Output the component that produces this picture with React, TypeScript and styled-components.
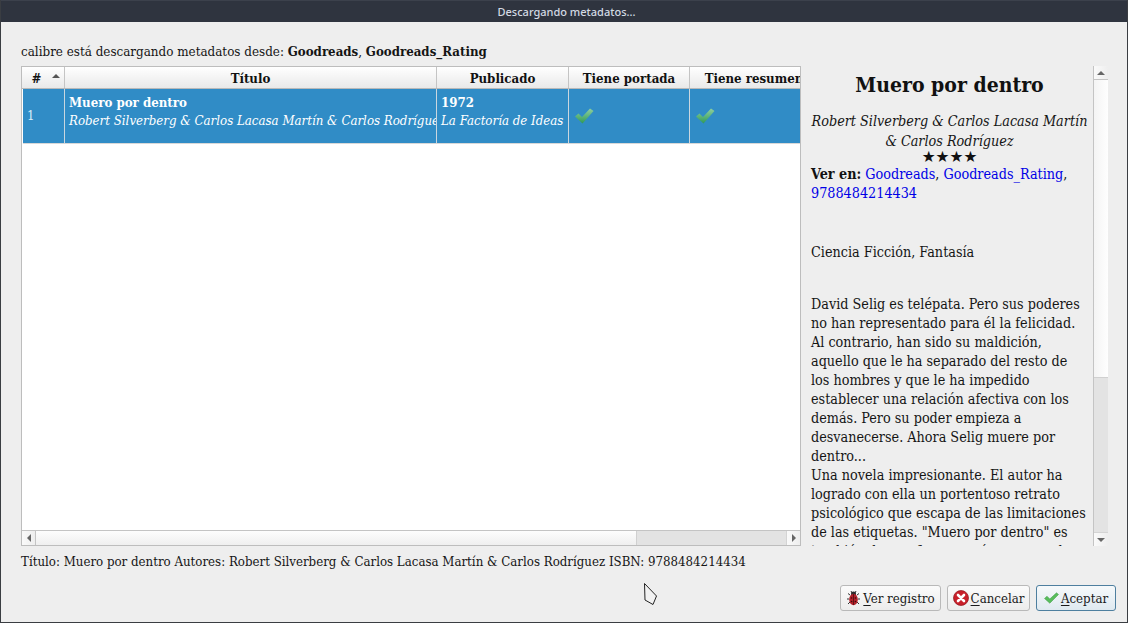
import React from "react";
import styled, { createGlobalStyle } from "styled-components";

const SERIF = `"DejaVu Serif Condensed", "DejaVu Serif", "Liberation Serif", serif`;

const Global = createGlobalStyle`
  html, body { margin: 0; padding: 0; background: #eeeeee; }
  body { width: 1128px; height: 623px; overflow: hidden; }
`;

const Win = styled.div`
  position: relative;
  width: 1128px;
  height: 623px;
  box-sizing: border-box;
  display: flex;
  flex-direction: column;
  background: #eeeeee;
  border: 1px solid #3a3d42;
  border-top: 0;
  font-family: ${SERIF};
  font-stretch: condensed;
  font-size: 13.15px;
  color: #151515;
  overflow: hidden;
`;

const TitleBar = styled.div`
  height: 22px;
  flex: none;
  margin: 0 -1px;
  padding-left: 5px;
  background: #2f343f;
  border-top: 1px solid #3c414c;
  box-sizing: border-box;
  color: #d3dae3;
  font-family: "Noto Sans", sans-serif;
  font-size: 11px;
  font-weight: 500;
  letter-spacing: 0;
  text-align: center;
  line-height: 21px;
`;

const Body = styled.div`
  flex: 1;
  min-height: 0;
  display: flex;
  flex-direction: column;
  padding: 21px 11px 11px 20px;
`;

const Heading = styled.div`
  height: 23px;
  line-height: 18px;
  flex: none;
  font-size: 13.3px;
  white-space: nowrap;
  b { font-weight: 700; font-size: 13.15px; }
`;

const Middle = styled.div`
  display: flex;
  flex: none;
  height: 480px;
  gap: 2px;
`;

const TableFrame = styled.div`
  width: 780px;
  flex: none;
  box-sizing: border-box;
  border: 1px solid #bdbdbd;
  background: #fff;
  display: flex;
  flex-direction: column;
  overflow: hidden;
`;

const HeaderRow = styled.div`
  display: grid;
  grid-template-columns: 43px 372px 132px 121px 128px;
  height: 22px;
  flex: none;
  box-sizing: border-box;
  border-bottom: 1px solid #b9b9b9;
  background: linear-gradient(#ffffff, #e9e9e9);
  width: 778px;
  overflow: hidden;
`;

const HeadCell = styled.div<{ $pad?: boolean; $open?: boolean }>`
  position: relative;
  box-sizing: border-box;
  border-right: ${(p) => (p.$open ? "0" : "1px solid #c4c4c4")};
  font-weight: 700;
  color: #111;
  text-align: center;
  line-height: 23px;
  white-space: nowrap;
  overflow: hidden;
  padding-right: ${(p) => (p.$pad ? "13px" : "0")};
`;

const SortArrow = styled.span`
  position: absolute;
  right: 4px;
  top: 7px;
  width: 0;
  height: 0;
  border-left: 4px solid transparent;
  border-right: 4px solid transparent;
  border-bottom: 4px solid #555;
`;

const DataRow = styled.div`
  display: grid;
  grid-template-columns: 42px 372px 132px 121px 110px;
  height: 55px;
  flex: none;
  box-sizing: border-box;
  margin-left: 1px;
  width: 777px;
  background: #308cc6;
  border-bottom: 1px solid #d8d8d8;
  color: #fff;
  overflow: hidden;
`;

const DataCell = styled.div<{ $open?: boolean }>`
  box-sizing: border-box;
  border-right: ${(p) => (p.$open ? "0" : "1px solid #c9d6df")};
  padding: 5px 0 0 4px;
  line-height: 18px;
  white-space: nowrap;
  overflow: hidden;
`;

const NumCell = styled(DataCell)`
  display: flex;
  align-items: center;
  padding: 0 0 0 4px;
  color: #d8ecf8;
`;

const CheckCell = styled(DataCell)`
  padding: 18px 0 0 5px;
`;

const Strong = styled.div`
  font-weight: 700;
`;
const Em = styled.div`
  font-style: italic;
`;

const TableEmpty = styled.div`
  flex: 1;
  background: #fff;
`;

const HBar = styled.div`
  height: 14px;
  flex: none;
  display: flex;
  background: #e3e3e3;
  border-top: 1px solid #c4c4c4;
`;

const ArrowBtn = styled.div<{ $dir: "l" | "r" | "u" | "d" }>`
  flex: none;
  width: ${(p) => (p.$dir === "l" || p.$dir === "r" ? "14px" : "100%")};
  height: ${(p) => (p.$dir === "l" || p.$dir === "r" ? "100%" : "14px")};
  box-sizing: border-box;
  display: flex;
  align-items: center;
  justify-content: center;
  background: linear-gradient(to right, #fafafa, #eeeeee);
  ${(p) => (p.$dir === "l" ? "border-right: 1px solid #c4c4c4;" : "")}
  ${(p) => (p.$dir === "r" ? "border-left: 1px solid #d4d4d4;" : "")}
  ${(p) => (p.$dir === "u" ? "border-bottom: 1px solid #c4c4c4;" : "")}
  ${(p) => (p.$dir === "d" ? "border-top: 1px solid #d4d4d4;" : "")}
`;

const Tri = styled.span<{ $dir: "l" | "r" | "u" | "d" }>`
  width: 0;
  height: 0;
  ${(p) =>
    p.$dir === "l"
      ? "border-top:4px solid transparent;border-bottom:4px solid transparent;border-right:4px solid #666;"
      : p.$dir === "r"
      ? "border-top:4px solid transparent;border-bottom:4px solid transparent;border-left:4px solid #666;"
      : p.$dir === "u"
      ? "border-left:4px solid transparent;border-right:4px solid transparent;border-bottom:4px solid #666;"
      : "border-left:4px solid transparent;border-right:4px solid transparent;border-top:4px solid #666;"}
`;

const HThumb = styled.div`
  width: 601px;
  flex: none;
  background: linear-gradient(#fdfdfd, #efefef);
  border-right: 1px solid #d0d0d0;
  box-sizing: border-box;
`;
const HTrough = styled.div`
  flex: 1;
`;

const SidePanel = styled.div`
  flex: 1;
  display: flex;
  min-width: 0;
`;

const Details = styled.div`
  width: 290px;
  flex: none;
  height: 480px;
  overflow: hidden;
  box-sizing: border-box;
  padding: 0 5px 0 8px;
  font-size: 14.25px;
  line-height: 19px;
`;

const BookTitle = styled.h2`
  margin: 4px 0 12px;
  font-size: 21px;
  line-height: 30px;
  font-weight: 700;
  text-align: center;
  color: #111;
`;

const Authors = styled.div`
  font-style: italic;
  text-align: center;
  line-height: 19.5px;
`;

const Stars = styled.div`
  text-align: center;
  line-height: 13px;
  font-family: "DejaVu Sans", sans-serif;
  font-stretch: normal;
  font-size: 15.5px;
  color: #111;
`;

const Links = styled.div`
  margin-top: 1px;
  a { color: #0000e6; text-decoration: none; }
  b { color: #111; }
`;

const Tags = styled.div`
  margin-top: 40px;
`;

const Para = styled.div`
  margin-top: 33px;
`;

const VBar = styled.div`
  width: 14px;
  flex: none;
  height: 480px;
  display: flex;
  flex-direction: column;
  background: #e3e3e3;
  border-left: 1px solid #c4c4c4;
`;

const VThumb = styled.div`
  height: 298px;
  flex: none;
  background: linear-gradient(to right, #f4f4f4, #fefefe);
  border-bottom: 1px solid #d0d0d0;
  box-sizing: border-box;
`;
const VTrough = styled.div`
  flex: 1;
`;

const Status = styled.div`
  flex: none;
  margin-top: 6px;
  line-height: 20px;
  height: 20px;
  white-space: nowrap;
`;

const Footer = styled.div`
  margin-top: auto;
  display: flex;
  justify-content: flex-end;
  gap: 6px;
`;

const Btn = styled.button<{ $w: number; $primary?: boolean }>`
  width: ${(p) => p.$w}px;
  height: 26px;
  box-sizing: border-box;
  display: flex;
  align-items: center;
  justify-content: center;
  gap: 2px;
  padding: 0;
  font: inherit;
  color: #1a1a1a;
  border-radius: 3px;
  border: 1px solid ${(p) => (p.$primary ? "#4e7f9f" : "#b9b9b9")};
  background: ${(p) =>
    p.$primary ? "linear-gradient(#f6f9fb, #dfe9f0)" : "linear-gradient(#fbfbfb, #ececec)"};
  u { text-decoration: underline; text-underline-offset: 2px; }
`;

const Pointer = styled.svg`
  position: absolute;
  left: 642px;
  top: 582px;
`;

const TableCheck = ({ id }: { id: string }) => (
  <svg width="20" height="18" viewBox="0 0 20 18">
    <defs>
      <linearGradient id={id} x1="0" y1="0" x2="0" y2="1">
        <stop offset="0" stopColor="#8fd0a0" />
        <stop offset="1" stopColor="#2f9a57" />
      </linearGradient>
    </defs>
    <path d="M1 9.5 L4.5 6.5 L8 10 L16 1.5 L19.5 4 L8.5 16.5 Z" fill={`url(#${id})`} />
  </svg>
);

const Bug = () => (
  <svg width="15" height="16" viewBox="0 0 15 16">
    <g stroke="#333" strokeWidth="1" fill="none">
      <path d="M4 5 L2 3.5 M11 5 L13 3.5 M3 9 L1 9 M12 9 L14 9 M4 12 L2 14 M11 12 L13 14" />
      <path d="M5 1 L6 3 M10 1 L9 3" />
    </g>
    <circle cx="7.5" cy="4" r="2.5" fill="#2c2c2c" />
    <ellipse cx="7.5" cy="9.5" rx="4.3" ry="5.8" fill="#b3202a" />
    <path d="M7.5 4 V15" stroke="#4a0f12" strokeWidth="0.8" />
    <circle cx="5.5" cy="8" r="0.8" fill="#3a0b0e" />
    <circle cx="9.5" cy="8" r="0.8" fill="#3a0b0e" />
    <circle cx="5.6" cy="11.5" r="0.8" fill="#3a0b0e" />
    <circle cx="9.4" cy="11.5" r="0.8" fill="#3a0b0e" />
  </svg>
);

const CancelIcon = () => (
  <svg width="16" height="16" viewBox="0 0 16 16">
    <circle cx="8" cy="8" r="7.5" fill="#c8202a" stroke="#8f1218" strokeWidth="0.7" />
    <path d="M5 5 L11 11 M11 5 L5 11" stroke="#fff" strokeWidth="2.6" strokeLinecap="round" />
  </svg>
);

const OkIcon = () => (
  <svg width="15" height="12" viewBox="0 0 15 12">
    <path d="M0.5 6.5 L3 4.2 L5.8 7 L12.5 0.8 L14.5 2.5 L5.8 11.2 Z" fill="#58bd5c" stroke="#3f9a48" strokeWidth="0.5" />
  </svg>
);

export default function App() {
  return (
    <Win>
      <Global />
      <TitleBar>Descargando metadatos...</TitleBar>
      <Body>
        <Heading>
          calibre está descargando metadatos desde: <b>Goodreads</b>, <b>Goodreads_Rating</b>
        </Heading>
        <Middle>
          <TableFrame>
            <HeaderRow>
              <HeadCell $pad>
                #<SortArrow />
              </HeadCell>
              <HeadCell>Título</HeadCell>
              <HeadCell>Publicado</HeadCell>
              <HeadCell>Tiene portada</HeadCell>
              <HeadCell $open>Tiene resumen</HeadCell>
            </HeaderRow>
            <DataRow>
              <NumCell>1</NumCell>
              <DataCell>
                <Strong>Muero por dentro</Strong>
                <Em>Robert Silverberg &amp; Carlos Lacasa Martín &amp; Carlos Rodríguez</Em>
              </DataCell>
              <DataCell>
                <Strong>1972</Strong>
                <Em>La Factoría de Ideas</Em>
              </DataCell>
              <CheckCell>
                <TableCheck id="chk-a" />
              </CheckCell>
              <CheckCell $open>
                <TableCheck id="chk-b" />
              </CheckCell>
            </DataRow>
            <TableEmpty />
            <HBar>
              <ArrowBtn $dir="l">
                <Tri $dir="l" />
              </ArrowBtn>
              <HThumb />
              <HTrough />
              <ArrowBtn $dir="r">
                <Tri $dir="r" />
              </ArrowBtn>
            </HBar>
          </TableFrame>
          <SidePanel>
            <Details>
              <BookTitle>Muero por dentro</BookTitle>
              <Authors>Robert Silverberg &amp; Carlos Lacasa Martín &amp; Carlos Rodríguez</Authors>
              <Stars>★★★★</Stars>
              <Links>
                <b>Ver en:</b> <a>Goodreads</a>, <a>Goodreads_Rating</a>, <a>9788484214434</a>
              </Links>
              <Tags>Ciencia Ficción, Fantasía</Tags>
              <Para>
                David Selig es telépata. Pero sus poderes no han representado para él la felicidad. Al
                contrario, han sido su maldición, aquello que le ha separado del resto de los hombres y
                que le ha impedido establecer una relación afectiva con los demás. Pero su poder empieza
                a desvanecerse. Ahora Selig muere por dentro...
                <br />
                Una novela impresionante. El autor ha logrado con ella un portentoso retrato psicológico
                que escapa de las limitaciones de las etiquetas. "Muero por dentro" es también, lo que
                fue en su época, una de las
              </Para>
            </Details>
            <VBar>
              <ArrowBtn $dir="u">
                <Tri $dir="u" />
              </ArrowBtn>
              <VThumb />
              <VTrough />
              <ArrowBtn $dir="d">
                <Tri $dir="d" />
              </ArrowBtn>
            </VBar>
          </SidePanel>
        </Middle>
        <Status>
          Título: Muero por dentro Autores: Robert Silverberg &amp; Carlos Lacasa Martín &amp; Carlos
          Rodríguez ISBN: 9788484214434
        </Status>
        <Footer>
          <Btn $w={101}>
            <Bug />
            <span>
              <u>V</u>er registro
            </span>
          </Btn>
          <Btn $w={83}>
            <CancelIcon />
            <span>
              <u>C</u>ancelar
            </span>
          </Btn>
          <Btn $w={80} $primary>
            <OkIcon />
            <span>
              <u>A</u>ceptar
            </span>
          </Btn>
        </Footer>
      </Body>
      <Pointer width="16" height="24" viewBox="0 0 16 24">
        <path d="M1.5 1.5 L2 18 L10 22.5 L13.5 14 Z" fill="#f2f2f2" stroke="#222" strokeWidth="1" strokeLinejoin="round" />
      </Pointer>
    </Win>
  );
}
